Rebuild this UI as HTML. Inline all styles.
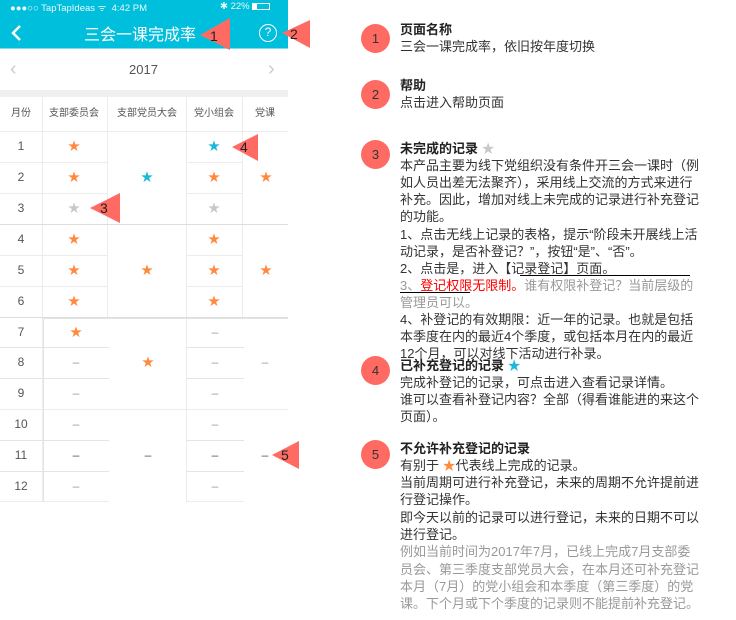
<!DOCTYPE html><html><head><meta charset="utf-8"><style>
*{margin:0;padding:0;box-sizing:border-box}
body{width:736px;height:620px;background:#fff;position:relative;overflow:hidden;font-family:"Liberation Sans","Noto Sans CJK SC",sans-serif;color:#333}
.a{position:absolute}
.h{position:absolute;height:1px;background:#ececec}
.v{position:absolute;width:1px;background:#ececec}
.c{position:absolute;width:60px;margin-left:-30px;text-align:center;font-size:12px;line-height:14px;margin-top:-7px}
.o{color:#ff8a3d}.b{color:#1cb8d9}.g{color:#c8c8c8}.d{color:#999}
.m{color:#555}
.t{position:absolute;left:400px;font-size:13px;line-height:17px;white-space:nowrap}
.bd{font-weight:bold;color:#222}
.gr{color:#999}
.badge{position:absolute;width:29px;height:29px;border-radius:50%;background:#ff6b63;color:#333;font-size:13px;line-height:29px;text-align:center;left:361px}
</style></head><body>
<div class="a" style="left:0;top:0;width:288px;height:48px;background:#00bfdc"></div>
<div class="a" style="left:10px;top:1px;font-size:9.5px;color:#e8f8fb">●●●○○ TapTapIdeas ᯤ&nbsp; 4:42 PM</div>
<div class="a" style="left:220px;top:1px;font-size:9.5px;color:#e8f8fb">✱ 22% <span style="display:inline-block;width:18px;height:7px;border:1px solid #fff;vertical-align:middle"><span style="display:block;width:4px;height:5px;background:#fff"></span></span></div>
<svg class="a" style="left:10px;top:24px" width="12" height="18"><path d="M10 2 L3 9 L10 16" stroke="#fff" stroke-width="2.5" fill="none"/></svg>
<div class="a" style="left:84px;top:21px;font-size:16px;color:#fff">三会一课完成率</div>
<div class="a" style="left:259px;top:24px;width:18px;height:18px;border:1.5px solid #fff;border-radius:50%;color:#fff;font-size:12px;line-height:15px;text-align:center">?</div>
<div class="a" style="left:0;top:48px;width:288px;height:1px;background:#7fdcec"></div>
<div class="a" style="left:10px;top:58px;font-size:20px;color:#ccc">&#8249;</div>
<div class="a" style="left:268px;top:58px;font-size:20px;color:#ccc">&#8250;</div>
<div class="a" style="left:129px;top:62px;font-size:13px;color:#555">2017</div>
<div class="a" style="left:0;top:90px;width:288px;height:7px;background:#f0f0f0"></div>
<div class="c m" style="left:21px;top:114px;font-size:10px">月份</div>
<div class="c m" style="left:74px;top:114px;font-size:10px">支部委员会</div>
<div class="c m" style="left:147px;top:114px;font-size:10px">支部党员大会</div>
<div class="c m" style="left:214px;top:114px;font-size:10px">党小组会</div>
<div class="c m" style="left:265px;top:114px;font-size:10px">党课</div>
<div class="h" style="left:0;top:131px;width:288px"></div>
<div class="v" style="left:42px;top:97px;height:405px"></div>
<div class="v" style="left:107px;top:97px;height:220px"></div>
<div class="v" style="left:186px;top:97px;height:405px"></div>
<div class="v" style="left:242px;top:97px;height:220px"></div>
<div class="h" style="left:0;top:162px;width:107px"></div><div class="h" style="left:186px;top:162px;width:56px"></div>
<div class="h" style="left:0;top:193px;width:107px"></div><div class="h" style="left:186px;top:193px;width:56px"></div>
<div class="h" style="left:0;top:224px;width:288px;background:#ddd"></div>
<div class="h" style="left:0;top:255px;width:107px"></div><div class="h" style="left:186px;top:255px;width:56px"></div>
<div class="h" style="left:0;top:286px;width:107px"></div><div class="h" style="left:186px;top:286px;width:56px"></div>
<div class="h" style="left:0;top:317px;width:288px;background:#ddd"></div>
<div class="h" style="left:43px;top:318px;width:245px;background:#e4e4e4"></div>
<div class="h" style="left:0;top:347px;width:109px;background:#e4e4e4"></div><div class="h" style="left:187px;top:347px;width:57px;background:#e4e4e4"></div>
<div class="h" style="left:0;top:378px;width:109px;background:#e4e4e4"></div><div class="h" style="left:187px;top:378px;width:57px;background:#e4e4e4"></div>
<div class="h" style="left:0;top:409px;width:288px"></div>
<div class="h" style="left:0;top:440px;width:109px;background:#e4e4e4"></div><div class="h" style="left:187px;top:440px;width:57px;background:#e4e4e4"></div>
<div class="h" style="left:0;top:471px;width:109px;background:#e4e4e4"></div><div class="h" style="left:187px;top:471px;width:57px;background:#e4e4e4"></div>
<div class="h" style="left:0;top:501px;width:109px"></div><div class="h" style="left:187px;top:501px;width:57px"></div>
<div class="v" style="left:43px;top:317px;height:185px;background:#e4e4e4"></div>
<div class="c m" style="left:21px;top:146px">1</div><div class="c m" style="left:21px;top:177px">2</div><div class="c m" style="left:21px;top:208px">3</div><div class="c m" style="left:21px;top:239px">4</div><div class="c m" style="left:21px;top:270px">5</div><div class="c m" style="left:21px;top:301px">6</div><div class="c m" style="left:21px;top:332px">7</div><div class="c m" style="left:21px;top:362px">8</div><div class="c m" style="left:21px;top:393px">9</div><div class="c m" style="left:21px;top:424px">10</div><div class="c m" style="left:21px;top:455px">11</div><div class="c m" style="left:21px;top:486px">12</div>
<div class="c o" style="left:74px;top:146px">★</div><div class="c b" style="left:214px;top:146px">★</div>
<div class="c o" style="left:74px;top:177px">★</div><div class="c b" style="left:147px;top:177px">★</div><div class="c o" style="left:214px;top:177px">★</div><div class="c o" style="left:266px;top:177px">★</div>
<div class="c g" style="left:74px;top:208px">★</div><div class="c g" style="left:214px;top:208px">★</div>
<div class="c o" style="left:74px;top:239px">★</div><div class="c o" style="left:214px;top:239px">★</div>
<div class="c o" style="left:74px;top:270px">★</div><div class="c o" style="left:147px;top:270px">★</div><div class="c o" style="left:214px;top:270px">★</div><div class="c o" style="left:266px;top:270px">★</div>
<div class="c o" style="left:74px;top:301px">★</div><div class="c o" style="left:214px;top:301px">★</div>
<div class="c o" style="left:76px;top:332px">★</div><div class="c d" style="left:215px;top:332px">–</div>
<div class="c d" style="left:76px;top:362px">–</div><div class="c o" style="left:148px;top:362px">★</div><div class="c d" style="left:215px;top:362px">–</div><div class="c d" style="left:265px;top:362px">–</div>
<div class="c d" style="left:76px;top:393px">–</div><div class="c d" style="left:215px;top:393px">–</div>
<div class="c d" style="left:76px;top:424px">–</div><div class="c d" style="left:215px;top:424px">–</div>
<div class="c m" style="left:76px;top:455px">–</div><div class="c m" style="left:148px;top:455px">–</div><div class="c m" style="left:215px;top:455px">–</div><div class="c m" style="left:265px;top:455px">–</div>
<div class="c d" style="left:76px;top:486px">–</div><div class="c d" style="left:215px;top:486px">–</div>
<svg class="a" style="left:0;top:0" width="320" height="500">
<g fill="#ff6b63"><polygon points="200,35 230,18 230,50"/><polygon points="282,33 310,20 310,48"/><polygon points="90,208 120,193 120,223"/><polygon points="232,147 258,134 258,161"/><polygon points="272,455 299,441 299,469"/></g>
<g font-family="Liberation Sans" font-size="14" fill="#222"><text x="210" y="41">1</text><text x="290" y="39">2</text><text x="100" y="213">3</text><text x="240" y="152">4</text><text x="281" y="460">5</text></g>
</svg>
<div class="badge" style="top:24px">1</div>
<div class="badge" style="top:80px">2</div>
<div class="badge" style="top:140px">3</div>
<div class="badge" style="top:356px">4</div>
<div class="badge" style="top:440px">5</div>
<div class="t bd" style="top:21px">页面名称</div>
<div class="t" style="top:38px">三会一课完成率，依旧按年度切换</div>
<div class="t bd" style="top:77px">帮助</div>
<div class="t" style="top:94px">点击进入帮助页面</div>
<div class="t bd" style="top:140px">未完成的记录 <span class="g">★</span></div>
<div class="t" style="top:157px">本产品主要为线下党组织没有条件开三会一课时（例</div>
<div class="t" style="top:174px">如人员出差无法聚齐），采用线上交流的方式来进行</div>
<div class="t" style="top:191px">补充。因此，增加对线上未完成的记录进行补充登记</div>
<div class="t" style="top:208px">的功能。</div>
<div class="t" style="top:226px">1、点击无线上记录的表格，提示“阶段未开展线上活</div>
<div class="t" style="top:243px">动记录，是否补登记？”，按钮“是”、“否”。</div>
<div class="t" style="top:260px">2、点击是，进入【记录登记】页面。</div>
<div class="a" style="left:520px;top:275px;width:170px;height:1px;background:#000"></div>
<div class="t" style="top:277px"><span class="gr">3、</span><span style="color:#f00">登记权限无限制。</span><span class="gr">谁有权限补登记？当前层级的</span></div>
<div class="a" style="left:400px;top:292px;width:70px;height:1px;background:#000"></div>
<div class="t gr" style="top:294px">管理员可以。</div>
<div class="t" style="top:311px">4、补登记的有效期限：近一年的记录。也就是包括</div>
<div class="t" style="top:328px">本季度在内的最近4个季度，或包括本月在内的最近</div>
<div class="t" style="top:345px">12个月，可以对线下活动进行补录。</div>
<div class="t bd" style="top:357px">已补充登记的记录 <span class="b">★</span></div>
<div class="t" style="top:374px">完成补登记的记录，可点击进入查看记录详情。</div>
<div class="t" style="top:391px">谁可以查看补登记内容？全部（得看谁能进的来这个</div>
<div class="t" style="top:408px">页面）。</div>
<div class="t bd" style="top:440px">不允许补充登记的记录</div>
<div class="t" style="top:457px">有别于 <span class="o">★</span>代表线上完成的记录。</div>
<div class="t" style="top:474px">当前周期可进行补充登记，未来的周期不允许提前进</div>
<div class="t" style="top:491px">行登记操作。</div>
<div class="t" style="top:509px">即今天以前的记录可以进行登记，未来的日期不可以</div>
<div class="t" style="top:526px">进行登记。</div>
<div class="t gr" style="top:543px">例如当前时间为2017年7月，已线上完成7月支部委</div>
<div class="t gr" style="top:561px">员会、第三季度支部党员大会，在本月还可补充登记</div>
<div class="t gr" style="top:578px">本月（7月）的党小组会和本季度（第三季度）的党</div>
<div class="t gr" style="top:595px">课。下个月或下个季度的记录则不能提前补充登记。</div>
</body></html>
